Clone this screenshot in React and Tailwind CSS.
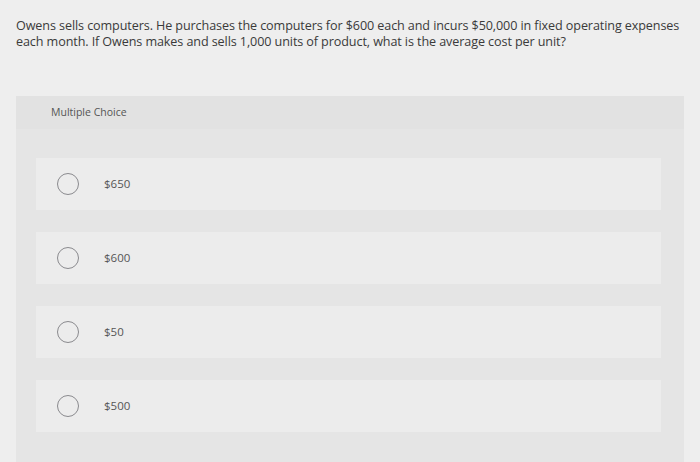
import React from 'react'

const choices = ['$650', '$600', '$50', '$500']

export default function App() {
  return (
    <div className="w-[700px] h-[462px] overflow-hidden bg-[#eeeeee] font-['Open_Sans',sans-serif]">
      <p className="px-[16px] pt-[18px] text-[12.6px] leading-[16px] text-[#3a3a3a] tracking-[-0.1px]">
        Owens sells computers. He purchases the computers for $600 each and incurs $50,000 in fixed operating expenses each month. If Owens makes and sells 1,000 units of product, what is the average cost per unit?
      </p>

      <div className="ml-[16px] mt-[46px] w-[668px] h-[400px] bg-[#e5e5e5]">
        <div className="h-[33px] pl-[35px] flex items-center bg-[#e2e2e2]">
          <span className="text-[10.5px] text-[#555555]">Multiple Choice</span>
        </div>
        <div className="flex flex-col gap-[22px] pl-[20px] pr-[23px] pt-[29px]">
          {choices.map((c) => (
            <div key={c} className="h-[52px] bg-[#ececec] flex items-center pl-[21px]">
              <span className="w-[22px] h-[22px] rounded-full border-[1.5px] border-[#8a8a8e]" />
              <span className="ml-[25px] text-[11.5px] text-[#555555]">{c}</span>
            </div>
          ))}
        </div>
      </div>
    </div>
  )
}
